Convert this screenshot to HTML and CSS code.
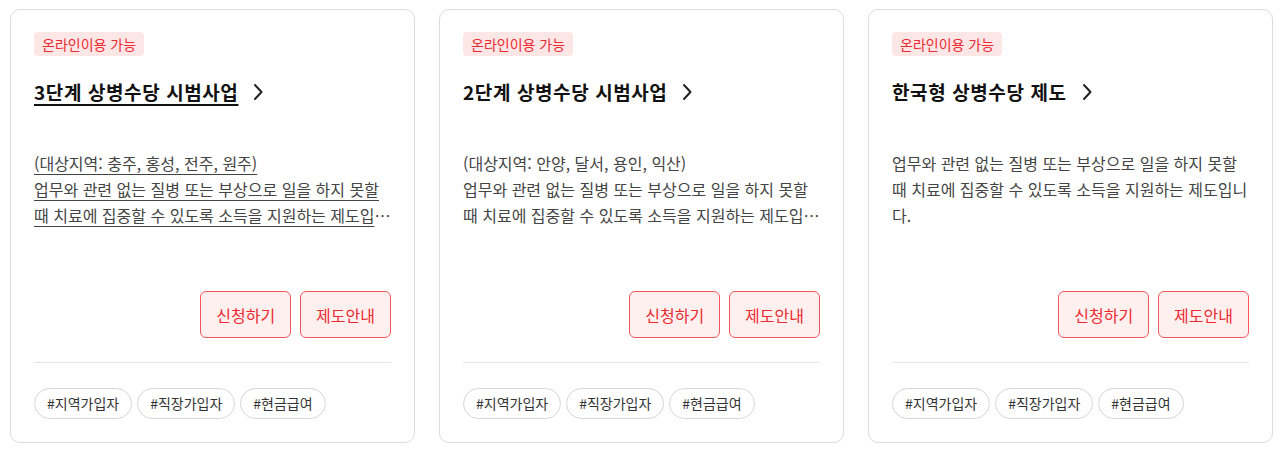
FILE: index.html
```html
<!DOCTYPE html>
<html lang="ko">
<head>
<meta charset="utf-8">
<link rel="stylesheet" href="styles.css">
</head>
<body>
<div class="cards">
  <div class="card is-hover">
    <span class="badge">온라인이용 가능</span>
    <a class="title" href="#"><span class="title-text">3단계 상병수당 시범사업</span>
      <svg class="chev" width="10" height="18" viewBox="0 0 10 18"><path d="M2 2 L8.5 9 L2 16" fill="none" stroke="#222" stroke-width="2" stroke-linecap="round" stroke-linejoin="round"/></svg></a>
    <p class="desc"><span class="desc-text">(대상지역: 충주, 홍성, 전주, 원주)<br>업무와 관련 없는 질병 또는 부상으로 일을 하지 못할 때 치료에 집중할 수 있도록 소득을 지원하는 제도입니다.</span></p>
    <div class="actions"><button class="btn">신청하기</button><button class="btn">제도안내</button></div>
    <div class="tags"><span class="tag">#지역가입자</span><span class="tag">#직장가입자</span><span class="tag">#현금급여</span></div>
  </div>
  <div class="card">
    <span class="badge">온라인이용 가능</span>
    <a class="title" href="#"><span class="title-text">2단계 상병수당 시범사업</span>
      <svg class="chev" width="10" height="18" viewBox="0 0 10 18"><path d="M2 2 L8.5 9 L2 16" fill="none" stroke="#222" stroke-width="2" stroke-linecap="round" stroke-linejoin="round"/></svg></a>
    <p class="desc"><span class="desc-text">(대상지역: 안양, 달서, 용인, 익산)<br>업무와 관련 없는 질병 또는 부상으로 일을 하지 못할 때 치료에 집중할 수 있도록 소득을 지원하는 제도입니다.</span></p>
    <div class="actions"><button class="btn">신청하기</button><button class="btn">제도안내</button></div>
    <div class="tags"><span class="tag">#지역가입자</span><span class="tag">#직장가입자</span><span class="tag">#현금급여</span></div>
  </div>
  <div class="card">
    <span class="badge">온라인이용 가능</span>
    <a class="title" href="#"><span class="title-text">한국형 상병수당 제도</span>
      <svg class="chev" width="10" height="18" viewBox="0 0 10 18"><path d="M2 2 L8.5 9 L2 16" fill="none" stroke="#222" stroke-width="2" stroke-linecap="round" stroke-linejoin="round"/></svg></a>
    <p class="desc"><span class="desc-text">업무와 관련 없는 질병 또는 부상으로 일을 하지 못할 때 치료에 집중할 수 있도록 소득을 지원하는 제도입니다.</span></p>
    <div class="actions"><button class="btn">신청하기</button><button class="btn">제도안내</button></div>
    <div class="tags"><span class="tag">#지역가입자</span><span class="tag">#직장가입자</span><span class="tag">#현금급여</span></div>
  </div>
</div>
</body>
</html>
```

FILE: styles.css
```css
* { box-sizing: border-box; }
html, body { margin: 0; padding: 0; background: #fff; }
body {
  font-family: "Noto Sans CJK KR", "Noto Sans", sans-serif;
  color: #222;
}
.cards {
  display: grid;
  grid-template-columns: repeat(3, 405px);
  gap: 24px;
  padding: 9px 0 0 10px;
}
.card {
  display: flex;
  flex-direction: column;
  align-items: flex-start;
  height: 434px;
  border: 1px solid #dcdcdc;
  border-radius: 10px;
  padding: 22px 23px 23px 23px;
}
.badge {
  display: inline-block;
  height: 24px;
  line-height: 24px;
  padding: 0 8px;
  font-size: 14px;
  color: #eb2a2f;
  background: #fde6e6;
  border-radius: 4px;
}
.title {
  display: flex;
  align-items: center;
  gap: 15px;
  margin-top: 23px;
  height: 26px;
  font-size: 19px;
  letter-spacing: 0.6px;
  font-weight: 700;
  color: #111;
  text-decoration: none;
  line-height: 26px;
}
.is-hover .title-text { text-decoration: underline; text-underline-offset: 4px; text-decoration-thickness: 2px; }
.chev { display: block; }
.desc {
  margin: 45px 0 0 0;
  font-size: 16px;
  line-height: 26px;
  color: #444;
  height: 78px;
  display: -webkit-box;
  -webkit-line-clamp: 3;
  -webkit-box-orient: vertical;
  overflow: hidden;
}
.is-hover .desc-text { text-decoration: underline; text-underline-offset: 4px; }
.actions {
  align-self: stretch;
  display: flex;
  justify-content: flex-end;
  gap: 9px;
  margin-top: auto;
  padding-bottom: 24px;
  border-bottom: 1px solid #e6e6e6;
}
.btn {
  height: 47px;
  padding: 0 15px;
  font-family: inherit;
  font-size: 16px;
  color: #eb2a2f;
  background: #fff0f0;
  border: 1px solid #f5565c;
  border-radius: 6px;
}
.tags {
  display: flex;
  gap: 5px;
  margin-top: 25px;
}
.tag {
  height: 31px;
  line-height: 29px;
  padding: 0 12px;
  font-size: 14px;
  color: #333;
  border: 1px solid #d6d6d6;
  border-radius: 16px;
}
```
